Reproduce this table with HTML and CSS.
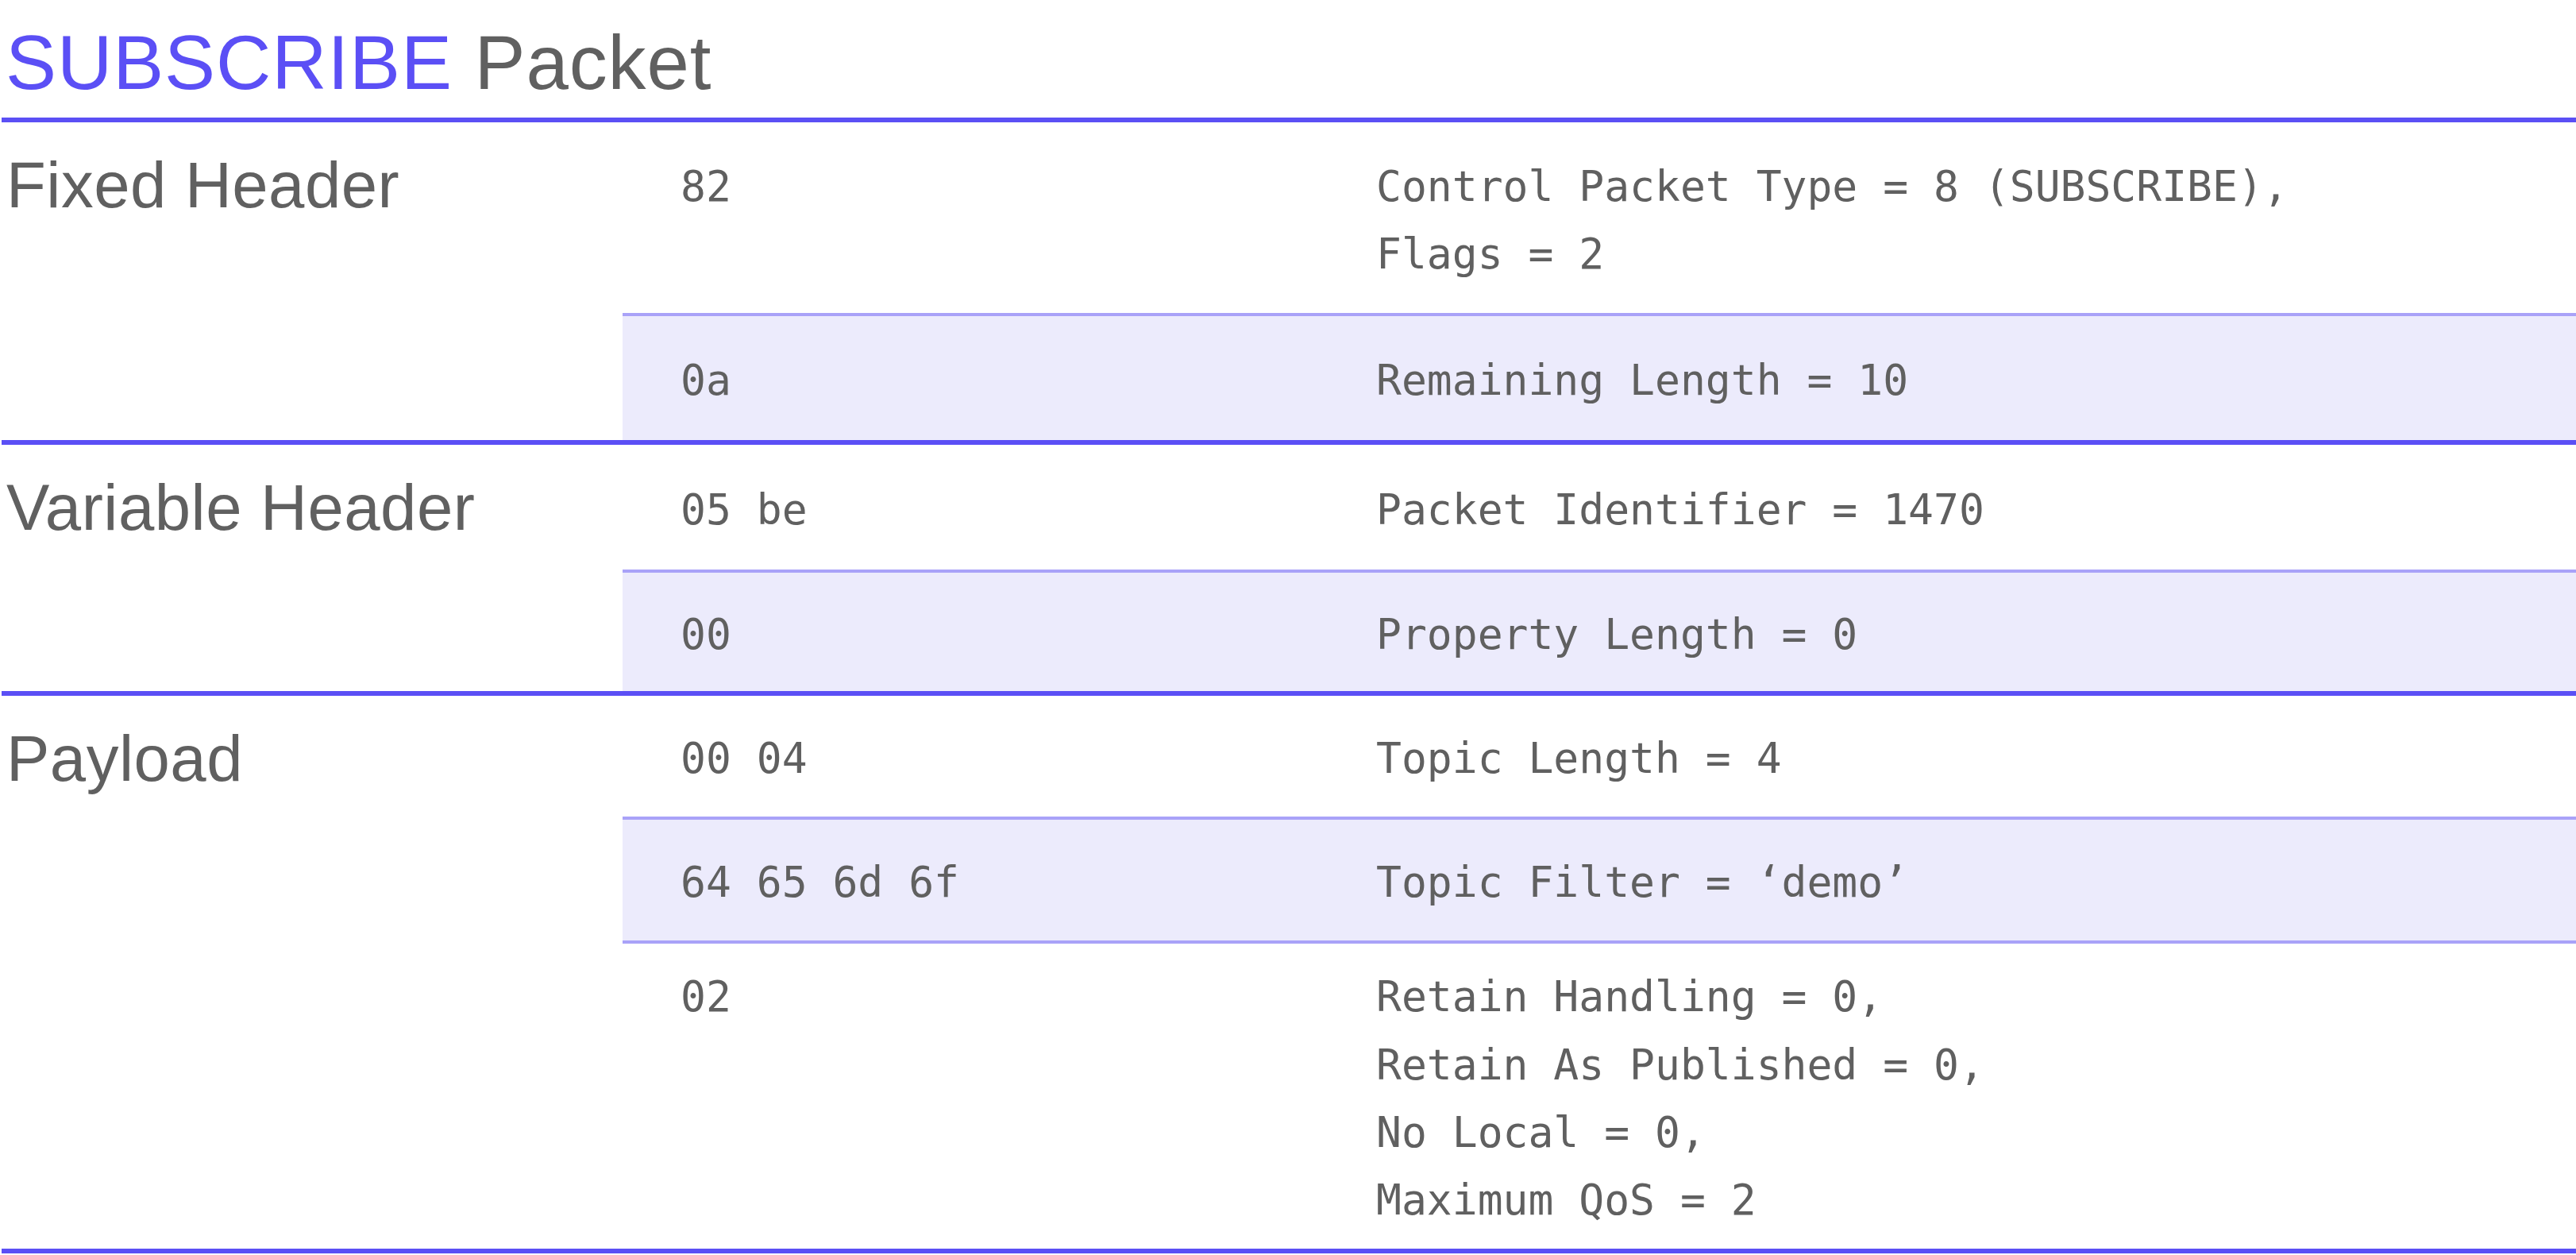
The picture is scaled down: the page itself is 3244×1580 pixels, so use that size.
FILE: index.html
```html
<!DOCTYPE html>
<html lang="en">
<head>
<meta charset="utf-8">
<title>SUBSCRIBE Packet</title>
<link rel="stylesheet" href="styles.css">
</head>
<body>
<div class="page">
  <h1 class="title"><span class="accent">SUBSCRIBE</span> Packet</h1>
  <div class="table">
    <section class="section">
      <div class="label">Fixed Header</div>
      <div class="rows">
        <div class="row p-240">
          <div class="hex">82</div>
          <div class="desc">Control Packet Type = 8 (SUBSCRIBE),<br>Flags = 2</div>
        </div>
        <div class="row shaded p-156">
          <div class="hex">0a</div>
          <div class="desc">Remaining Length = 10</div>
        </div>
      </div>
    </section>
    <section class="section">
      <div class="label">Variable Header</div>
      <div class="rows">
        <div class="row p-157">
          <div class="hex">05 be</div>
          <div class="desc">Packet Identifier = 1470</div>
        </div>
        <div class="row shaded p-149">
          <div class="hex">00</div>
          <div class="desc">Property Length = 0</div>
        </div>
      </div>
    </section>
    <section class="section last">
      <div class="label">Payload</div>
      <div class="rows">
        <div class="row p-152">
          <div class="hex">00 04</div>
          <div class="desc">Topic Length = 4</div>
        </div>
        <div class="row shaded p-152">
          <div class="hex">64 65 6d 6f</div>
          <div class="desc">Topic Filter = ‘demo’</div>
        </div>
        <div class="row p-384">
          <div class="hex">02</div>
          <div class="desc">Retain Handling = 0,<br>Retain As Published = 0,<br>No Local = 0,<br>Maximum QoS = 2</div>
        </div>
      </div>
    </section>
  </div>
</div>
</body>
</html>
```

FILE: styles.css
```css
html, body {
  margin: 0;
  padding: 0;
  background: #ffffff;
}

.page {
  padding: 31px 0 0 2px;
  color: #606060;
  font-family: "Liberation Sans", Arial, sans-serif;
}

.title {
  margin: 0 0 22px 0;
  padding-left: 5px;
  font-size: 96px;
  line-height: 95px;
  letter-spacing: 0.9px;
  font-weight: normal;
  color: #606060;
  white-space: nowrap;
}

.accent {
  color: #5b4ff5;
}

.section {
  display: grid;
  grid-template-columns: 782px 1fr;
  border-top: 6px solid #5b4ff5;
}

.section.last {
  border-bottom: 6px solid #5b4ff5;
}

.label {
  padding: 38px 0 0 6px;
  font-size: 81.5px;
  line-height: 81px;
  letter-spacing: 0.5px;
  white-space: nowrap;
}

.rows {
  display: flex;
  flex-direction: column;
}

.row {
  display: grid;
  grid-template-columns: 882px 1fr;
  font-family: "DejaVu Sans Mono", "Liberation Mono", monospace;
  font-size: 53px;
  line-height: 85.3px;
  white-space: nowrap;
}

.row + .row {
  border-top: 4px solid #a9a2f8;
}

.row.shaded {
  background: #ecebfc;
}

.hex {
  padding-left: 73px;
}

.desc {
  padding-left: 67px;
}

.p-240 { padding: 37.7px 0 31.7px; }
.p-156 { padding: 38.35px 0 32.35px; }
.p-157 { padding: 38.85px 0 32.85px; }
.p-149 { padding: 34.85px 0 28.85px; }
.p-152 { padding: 36.35px 0 30.35px; }
.p-384 { padding: 24.4px 0 18.4px; }
```
